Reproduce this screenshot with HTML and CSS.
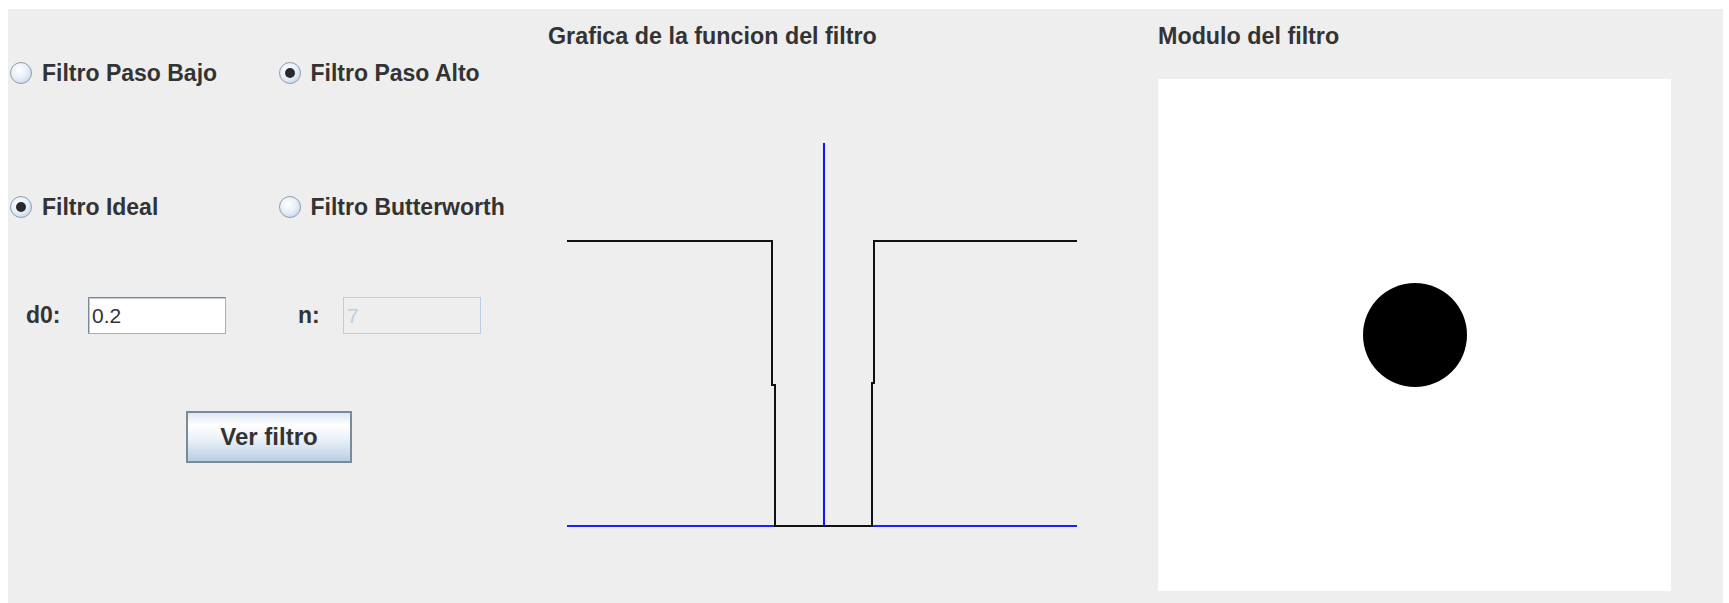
FILE: index.html
```html
<!DOCTYPE html>
<html lang="es">
<head>
    <meta charset="UTF-8">
    <title>Filtros</title>
    <link rel="stylesheet" href="styles.css">
</head>
<body>

    <div class="panel">

        <!-- opciones del filtro -->
        <div class="controls">
            <div class="row row-type">
                <label class="option"><span class="radio"></span>Filtro Paso Bajo</label>
                <label class="option"><span class="radio checked"></span>Filtro Paso Alto</label>
            </div>
            <div class="row row-kind">
                <label class="option"><span class="radio checked"></span>Filtro Ideal</label>
                <label class="option"><span class="radio"></span>Filtro Butterworth</label>
            </div>
            <div class="params">
                <span class="param-label">d0:</span>
                <div class="field">0.2</div>
                <span class="param-label">n:</span>
                <div class="field disabled">7</div>
            </div>
            <button class="btn">Ver filtro</button>
        </div>

        <!-- grafica -->
        <div class="graph">
            <h2 class="title">Grafica de la funcion del filtro</h2>
            <svg class="plot" width="610" height="460" viewBox="0 0 610 460">
                <line x1="27" y1="426" x2="537" y2="426" stroke="#2020ff" stroke-width="2"/>
                <path d="M27 141 H232 V285 H235 V426 H332 V283 H334 V141 H537" fill="none" stroke="#111" stroke-width="2"/>
                <line x1="284" y1="43" x2="284" y2="426" stroke="#1010ff" stroke-width="2"/>
            </svg>
        </div>

        <!-- modulo -->
        <div class="module">
            <h2 class="title">Modulo del filtro</h2>
            <div class="canvas">
                <div class="dot"></div>
            </div>
        </div>

    </div>

</body>
</html>
```

FILE: styles.css
```css
body {
    margin: 0;
    padding: 0;
    background-color: #ffffff;
    font-family: "Liberation Sans", Arial, sans-serif;
    color: #333333;
}

.panel {
    margin: 9px 6px 0 8px;
    height: 594px;
    background-color: #eeeeee;
    display: flex;
}

/* columna izquierda */
.controls {
    width: 530px;
    padding: 52px 0 0 2px;
    display: flex;
    flex-direction: column;
}

.row {
    display: flex;
    height: 22px;
    align-items: center;
    margin-top: 1px;
}

.row-kind {
    margin-top: 112px;
}

.option {
    width: 268.5px;
    flex-shrink: 0;
    display: flex;
    align-items: center;
    gap: 10px;
    font-weight: bold;
    font-size: 23px;
    white-space: nowrap;
}

.radio {
    width: 20px;
    height: 20px;
    border: 1px solid #8d9db0;
    border-radius: 50%;
    background: radial-gradient(circle at 40% 35%, #ffffff 0%, #e8f0f8 45%, #b9cde3 100%);
    display: flex;
    align-items: center;
    justify-content: center;
    flex-shrink: 0;
}

.radio.checked::after {
    content: "";
    width: 10px;
    height: 10px;
    border-radius: 50%;
    background-color: #2a2a2a;
}

.params {
    margin: 79px 0 0 16px;
    display: grid;
    grid-template-columns: 62px 210px 45px 138px;
    align-items: center;
}

.param-label {
    font-weight: bold;
    font-size: 23px;
}

.field {
    width: 133px;
    height: 35px;
    border: 1px solid #7a8a99;
    border-right-color: #a3b0bd;
    border-bottom-color: #a3b0bd;
    background-color: #ffffff;
    box-shadow: inset 1px 1px 0 #c0c8d0;
    font-size: 21px;
    line-height: 35px;
    padding-left: 3px;
}

.field.disabled {
    background-color: #eeeeee;
    border-color: #b8cfe5;
    box-shadow: none;
    color: #b8cfe5;
}

.btn {
    margin: 77px 0 0 176px;
    width: 166px;
    height: 52px;
    border: 2px solid #7a8a99;
    background: linear-gradient(#dde8f3 0%, #ffffff 25%, #eaf1f8 55%, #b8cfe5 100%);
    font-family: "Liberation Sans", Arial, sans-serif;
    font-weight: bold;
    font-size: 24px;
    color: #333333;
    padding: 0;
}

/* titulos */
.title {
    margin: 0;
    padding: 14px 0 0 8px;
    height: 30px;
    font-size: 23.3px;
    font-weight: bold;
    line-height: 26px;
}

.graph {
    width: 610px;
}

.plot {
    display: block;
    margin-top: 47px;
}

.module {
    flex: 1;
    padding-left: 8px;
}

.module .title {
    padding-left: 0;
}

.canvas {
    margin-top: 26px;
    width: 513px;
    height: 512px;
    background-color: #ffffff;
    display: flex;
    align-items: center;
    justify-content: center;
}

.dot {
    width: 104px;
    height: 104px;
    border-radius: 50%;
    background-color: #000000;
}
```
